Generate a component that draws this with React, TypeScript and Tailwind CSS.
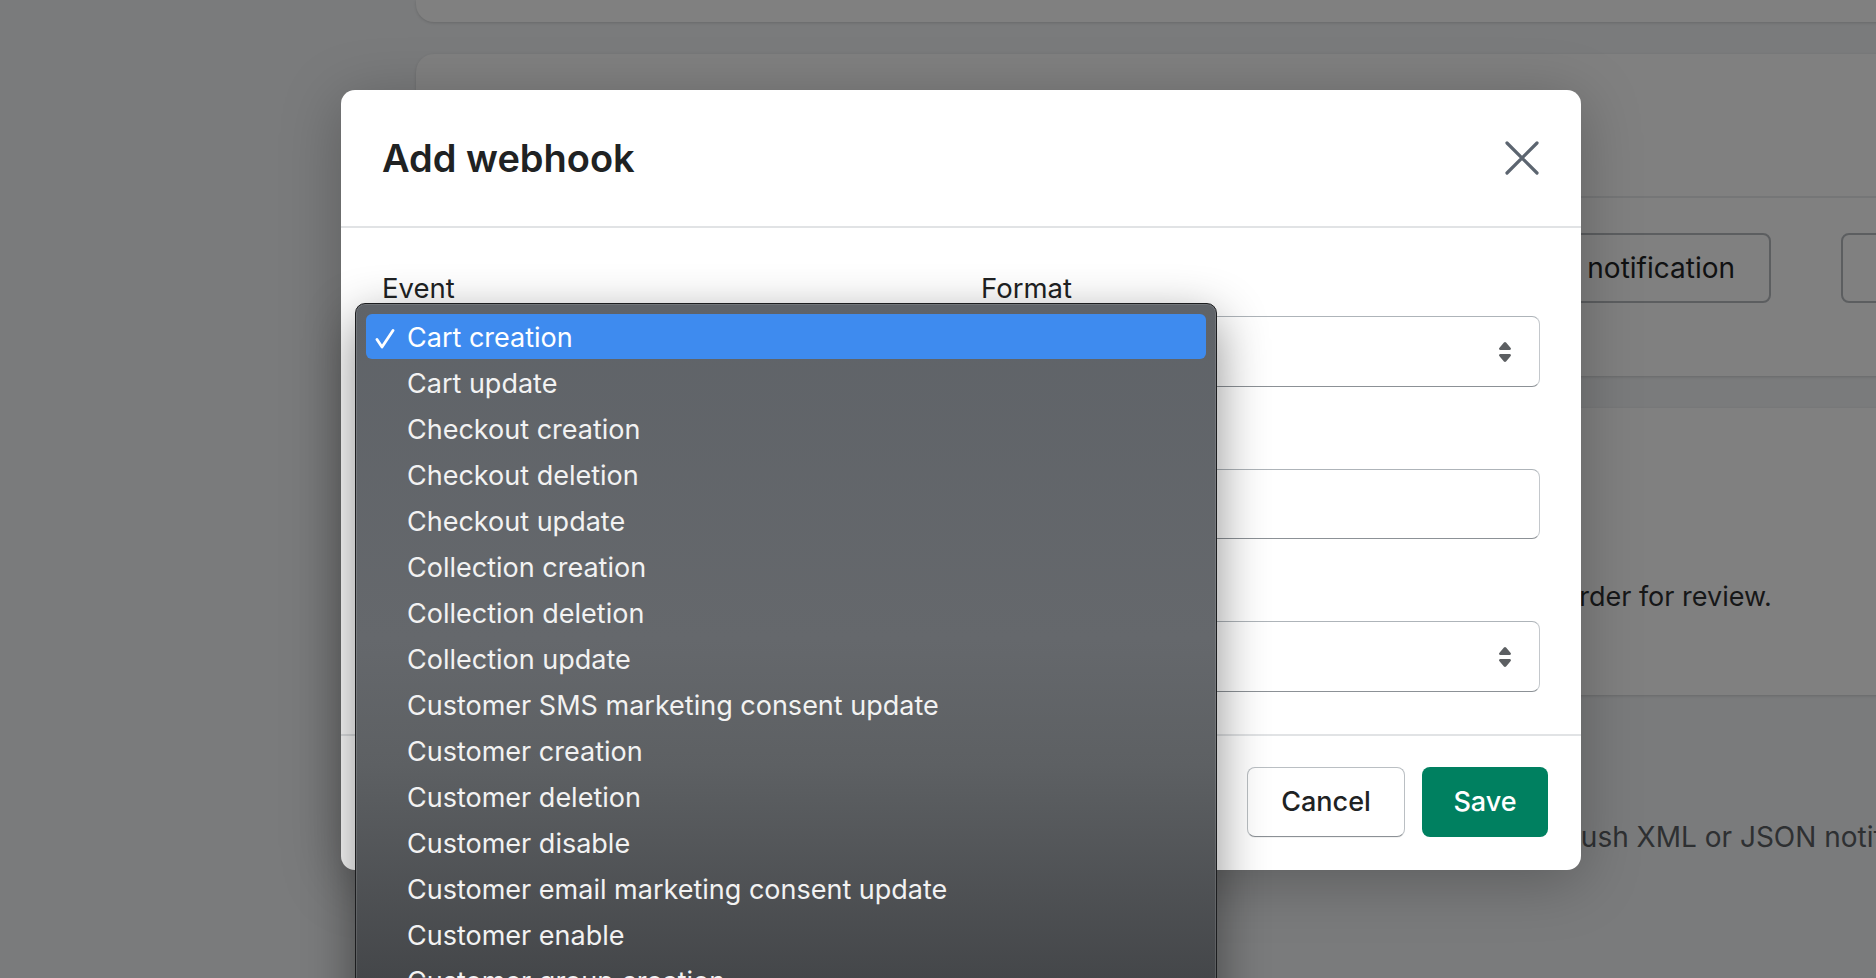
import React from "react";

// ─── Data ────────────────────────────────────────────────────────────────────

const EVENTS = [
  "Cart creation",
  "Cart update",
  "Checkout creation",
  "Checkout deletion",
  "Checkout update",
  "Collection creation",
  "Collection deletion",
  "Collection update",
  "Customer SMS marketing consent update",
  "Customer creation",
  "Customer deletion",
  "Customer disable",
  "Customer email marketing consent update",
  "Customer enable",
  "Customer group creation",
  "Customer group deletion",
];

// ─── Icons ───────────────────────────────────────────────────────────────────

function SelectArrows() {
  return (
    <svg viewBox="0 0 20 20" className="h-[40px] w-[40px] fill-[#5c5f62]">
      <path d="M7.676 9h4.648c.563 0 .879-.603.53-1.014l-2.323-2.746a.708.708 0 0 0-1.062 0l-2.324 2.746c-.347.411-.032 1.014.531 1.014Zm4.648 2h-4.648c-.563 0-.878.603-.53 1.014l2.323 2.746c.27.32.792.32 1.062 0l2.323-2.746c.349-.411.033-1.014-.53-1.014Z" />
    </svg>
  );
}

function CloseIcon() {
  return (
    <svg viewBox="0 0 34 34" className="h-[34px] w-[34px]">
      <path
        d="M2 2 L32 32 M32 2 L2 32"
        stroke="#5c6570"
        strokeWidth="3.2"
        strokeLinecap="round"
      />
    </svg>
  );
}

function Check() {
  return (
    <svg viewBox="0 0 20 20" className="h-[20px] w-[20px]">
      <path
        d="M2 10.5 L7 18 L18 1.5"
        fill="none"
        stroke="#ffffff"
        strokeWidth="2.8"
        strokeLinecap="round"
        strokeLinejoin="round"
      />
    </svg>
  );
}

// ─── Form bits ───────────────────────────────────────────────────────────────

const fieldBorder =
  "rounded-lg border-[1.5px] border-[#c4c8cc] border-t-[#aeb4b9] border-b-[#8c9196] bg-white";

function Label({ children }: { children: React.ReactNode }) {
  return (
    <div className="mb-[10px] text-[27.5px] leading-[36px] text-[#202223]">
      {children}
    </div>
  );
}

function FakeSelect({ value }: { value: string }) {
  return (
    <div
      className={`flex h-[71px] items-center justify-between pl-[24px] pr-[14px] text-[27px] text-[#202223] ${fieldBorder}`}
    >
      <span>{value}</span>
      <SelectArrows />
    </div>
  );
}

// ─── App ─────────────────────────────────────────────────────────────────────

export default function App() {
  return (
    <div className="relative h-[978px] w-[1876px] overflow-hidden bg-[#7a7b7c] font-['Inter','Liberation_Sans',sans-serif]">
      {/* Dimmed settings page behind the modal */}
      <div className="flex w-[2000px] flex-col gap-[32px] pl-[416px]">
        <div className="h-[22px] rounded-b-[18px] bg-[#808080] shadow-[0_1px_3px_rgba(0,0,0,0.15)]" />

        <div className="h-[322px] rounded-[18px] bg-[#808080] shadow-[0_1px_3px_rgba(0,0,0,0.15)]">
          <div className="h-[144px] border-b-2 border-[#757677] px-[40px] pt-[50px] text-[30px] font-semibold text-[#101112]">
            Webhooks
          </div>
          <div className="flex gap-[70px] pl-[955px] pt-[35px]">
            <div className="flex h-[70px] w-[400px] shrink-0 items-center justify-end rounded-lg border-2 border-[#5c5e60] pr-[34px] text-[28px] text-[#101112]">
              Send test notification
            </div>
            <div className="flex h-[70px] w-[340px] shrink-0 items-center justify-center rounded-lg border-2 border-[#5c5e60] text-[28px] text-[#101112]">
              Create webhook
            </div>
          </div>
        </div>

        <div className="h-[287px] rounded-[18px] bg-[#808080] shadow-[0_1px_3px_rgba(0,0,0,0.15)]">
          <p className="whitespace-nowrap pl-[763px] pt-[169px] text-[27px] text-[#161718]">
            Customers can submit a draft order for review.
          </p>
        </div>

        <p className="mt-[89px] whitespace-nowrap pl-[886px] text-[28px] text-[#2e3032]">
          Your store can also push XML or JSON notifications to a URL.
        </p>
      </div>

      {/* Modal */}
      <div className="absolute left-[341px] top-[90px] w-[1240px] rounded-[14px] bg-white shadow-[0_10px_60px_rgba(0,0,0,0.25)]">
        <div className="flex h-[138px] items-center justify-between border-b-2 border-[#e1e3e5] pl-[41px] pr-[42px]">
          <h2 className="text-[38px] font-semibold text-[#202223]">
            Add webhook
          </h2>
          <CloseIcon />
        </div>

        <div className="flex flex-col gap-[36px] px-[41px] py-[42px]">
          <div className="grid grid-cols-2 gap-x-[40px]">
            <div>
              <Label>Event</Label>
              <FakeSelect value="Cart creation" />
            </div>
            <div>
              <Label>Format</Label>
              <FakeSelect value="JSON" />
            </div>
          </div>
          <div>
            <Label>URL</Label>
            <div className={`h-[70px] ${fieldBorder}`} />
          </div>
          <div>
            <Label>Webhook API version</Label>
            <FakeSelect value="2023-04" />
          </div>
        </div>

        <div className="flex justify-end gap-[17px] border-t-2 border-[#e1e3e5] pb-[33px] pr-[33px] pt-[31px]">
          <button className="h-[70px] w-[158px] rounded-lg border-[1.5px] border-[#babfc3] border-b-[#8c9196] bg-white text-[27px] font-medium text-[#202223] shadow-[0_1px_0_rgba(0,0,0,0.05)]">
            Cancel
          </button>
          <button className="h-[70px] w-[126px] rounded-lg bg-[#008060] text-[27px] font-medium text-white">
            Save
          </button>
        </div>
      </div>

      {/* Native select popup */}
      <div className="absolute left-[355px] top-[303px] w-[862px] rounded-[10px] border border-[#1c1d1f] bg-[linear-gradient(180deg,#5f6368_0%,#65686c_45%,#5d6063_62%,#3c3e41_100%)] px-[10px] pt-[10px] shadow-[0_16px_50px_rgba(0,0,0,0.45),inset_0_0_0_1px_rgba(255,255,255,0.12)]">
        {EVENTS.map((ev, i) => (
          <div
            key={ev}
            className={
              i === 0
                ? "flex h-[45px] items-center rounded-[6px] bg-[#3e8bef] pt-[4px] text-[27px] text-white"
                : "flex h-[46px] items-center pt-[5px] text-[27px] text-[#f2f2f2]"
            }
          >
            <span className="flex w-[41px] shrink-0 justify-end pr-[12px]">
              {i === 0 && <Check />}
            </span>
            <span className="whitespace-nowrap">{ev}</span>
          </div>
        ))}
      </div>
    </div>
  );
}
